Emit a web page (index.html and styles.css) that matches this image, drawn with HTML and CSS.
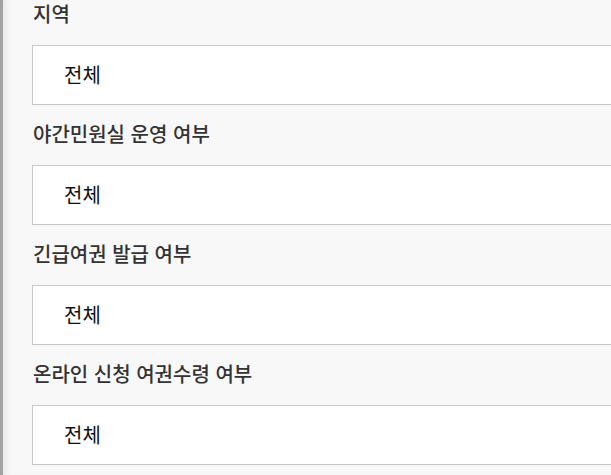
FILE: index.html
```html
<!DOCTYPE html>
<html lang="ko">
<head>
    <meta charset="UTF-8">
    <meta name="viewport" content="width=device-width, initial-scale=1.0">
    <title>여권 민원실 검색</title>
    <link rel="stylesheet" href="styles.css">
</head>
<body>
    <div class="panel">
        <div class="field">
            <label class="field-label">지역</label>
            <div class="select">전체</div>
        </div>
        <div class="field">
            <label class="field-label">야간민원실 운영 여부</label>
            <div class="select">전체</div>
        </div>
        <div class="field">
            <label class="field-label">긴급여권 발급 여부</label>
            <div class="select">전체</div>
        </div>
        <div class="field">
            <label class="field-label">온라인 신청 여권수령 여부</label>
            <div class="select">전체</div>
        </div>
    </div>
</body>
</html>
```

FILE: styles.css
```css
html, body {
    margin: 0;
    height: 100%;
    overflow: hidden;
}
body {
    font-family: "Noto Sans CJK KR", "Noto Sans", sans-serif;
    background: #f8f8f8;
}
.panel {
    height: 100%;
    border-left: 3px solid #a3a3a3;
    box-shadow: inset 8px 0 6px -4px rgba(0, 0, 0, 0.06);
    padding-left: 29px;
    margin-right: -60px;
}
.field {
    display: flex;
    flex-direction: column;
    margin-bottom: 15px;
}
.field-label {
    display: block;
    font-size: 20px;
    font-weight: 500;
    line-height: 28px;
    color: #333;
    margin-bottom: 17px;
    padding-left: 1px;
}
.select {
    height: 58px;
    line-height: 58px;
    border: 1px solid #c9c9c9;
    background: #fff;
    padding-left: 31px;
    font-size: 20px;
    color: #111;
}
```
